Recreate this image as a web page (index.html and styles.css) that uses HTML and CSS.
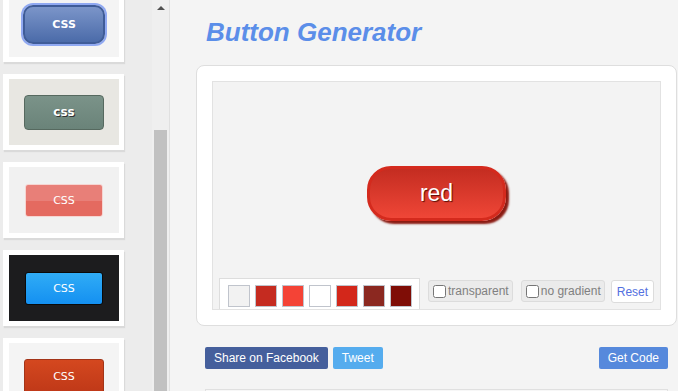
FILE: index.html
```html
<!DOCTYPE html>
<html lang="en">
<head>
    <meta charset="UTF-8">
    <meta name="viewport" content="width=device-width, initial-scale=1.0">
    <title>Button Generator</title>
    <link rel="stylesheet" href="styles.css">
</head>
<body>
    <div class="sidebar">
        <div class="thumbs">
            <div class="thumb-list">
                <div class="card"><div class="card-view view-light"><span class="demo demo-blue">CSS</span></div></div>
                <div class="card"><div class="card-view view-beige"><span class="demo demo-sage">css</span></div></div>
                <div class="card"><div class="card-view view-grey"><span class="demo demo-salmon">CSS</span></div></div>
                <div class="card"><div class="card-view view-dark"><span class="demo demo-sky">CSS</span></div></div>
                <div class="card"><div class="card-view view-light"><span class="demo demo-orange">CSS</span></div></div>
            </div>
        </div>
        <div class="scrollbar">
            <div class="arrow"></div>
            <div class="thumb"></div>
        </div>
    </div>

    <div class="main">
        <h1>Button Generator</h1>

        <div class="panel">
            <div class="preview">
                <span class="big-button">red</span>

                <div class="toolbar">
                    <div class="swatches">
                        <span class="swatch" style="background:#f2f2f2"></span>
                        <span class="swatch" style="background:#c52b20"></span>
                        <span class="swatch" style="background:#f44336"></span>
                        <span class="swatch" style="background:#ffffff"></span>
                        <span class="swatch" style="background:#d3271a"></span>
                        <span class="swatch" style="background:#8b2820"></span>
                        <span class="swatch" style="background:#7f0d06"></span>
                    </div>
                    <label class="option"><input type="checkbox">transparent</label>
                    <label class="option"><input type="checkbox">no gradient</label>
                    <button class="reset">Reset</button>
                </div>
            </div>
        </div>

        <div class="actions">
            <a class="btn btn-facebook">Share on Facebook</a>
            <a class="btn btn-tweet">Tweet</a>
            <a class="btn btn-code">Get Code</a>
        </div>

        <div class="code-box"></div>
    </div>
</body>
</html>
```

FILE: styles.css
```css
body {
    margin: 0;
    height: 391px;
    overflow: hidden;
    display: flex;
    font-family: "Liberation Sans", Arial, sans-serif;
    background: #f4f4f4;
}

/* left column with the presets */
.sidebar {
    display: flex;
    width: 169px;
    flex-shrink: 0;
    background: #ececec;
    border-right: 1px solid #e0e0e0;
}

.thumbs {
    width: 152px;
    overflow: hidden;
}

.thumb-list {
    margin-top: -14px;
    padding-left: 3px;
}

.card {
    width: 110px;
    padding: 5px 5px 5px 6px;
    margin-bottom: 12px;
    background: #fff;
    box-shadow: 1px 2px 1px #dadada;
}

.card-view {
    height: 66px;
    display: flex;
    align-items: center;
    justify-content: center;
}

.view-light { background: #f4f4f4; }
.view-beige { background: #e8e7e2; }
.view-grey { background: #f1f1f1; }
.view-dark { background: #1c1c1e; }

.demo {
    display: flex;
    align-items: center;
    justify-content: center;
    box-sizing: border-box;
    color: #fff;
    font-family: "DejaVu Sans", Verdana, sans-serif;
    font-size: 11px;
}

.demo-blue {
    width: 82px;
    height: 39px;
    border: 2px solid #3f5c98;
    border-radius: 10px;
    background: linear-gradient(#7b95c9, #4b6ba9);
    box-shadow: 0 0 0 2px #90a9f2;
    font-weight: bold;
}

.demo-sage {
    width: 80px;
    height: 35px;
    border: 1px solid #56695f;
    border-radius: 4px;
    background: linear-gradient(#7b9389, #6a8379);
    font-weight: bold;
    font-size: 12px;
    text-shadow: 1px 1px 0 #333;
}

.demo-salmon {
    width: 78px;
    height: 33px;
    border: 1px solid #f6d5d2;
    border-radius: 3px;
    background: linear-gradient(#e87f78 50%, #e46a60 50%);
}

.demo-sky {
    width: 78px;
    height: 33px;
    border: 1px solid #0a0a0a;
    border-radius: 3px;
    background: linear-gradient(#30acf6, #1490f1);
}

.demo-orange {
    width: 80px;
    height: 35px;
    border: 1px solid #a33418;
    border-radius: 3px;
    background: linear-gradient(#d4481f, #bf3818);
}

.scrollbar {
    width: 17px;
    background: #efefef;
}

.arrow {
    width: 0;
    height: 0;
    margin: 6px auto 0;
    border-left: 4px solid transparent;
    border-right: 4px solid transparent;
    border-bottom: 4px solid #505050;
}

.thumb {
    width: 13px;
    height: 300px;
    margin: 120px 0 0 2px;
    background: #c1c1c1;
}

/* right side */
.main {
    flex: 1;
    min-width: 0;
    overflow: hidden;
    padding: 0 1px 0 26px;
}

h1 {
    margin: 0;
    padding: 17px 0 0 10px;
    height: 30px;
    line-height: 30px;
    font-size: 26px;
    font-style: italic;
    font-weight: bold;
    color: #5b8ee9;
}

.panel {
    margin-top: 18px;
    padding: 15px;
    background: #fff;
    border: 1px solid #dedede;
    border-radius: 8px;
}

.preview {
    display: grid;
    grid-template-columns: minmax(0, 1fr);
    height: 229px;
    box-sizing: border-box;
    background: #f3f3f3;
    border: 1px solid #e2e2e2;
}

.big-button {
    grid-area: 1 / 1;
    place-self: center;
    margin-bottom: 4px;
    width: 139px;
    height: 55px;
    box-sizing: border-box;
    display: flex;
    align-items: center;
    justify-content: center;
    border: 3px solid #d42a1d;
    border-radius: 24px;
    background: linear-gradient(#c42d21, #ef4637);
    box-shadow: 3px 3px 2px #8b1b12;
    color: #fff;
    font-size: 23px;
    text-shadow: 1px 1px 1px #5a0d08;
}

.toolbar {
    grid-area: 1 / 1;
    align-self: end;
    display: flex;
    align-items: flex-end;
    margin-left: 6px;
}

.swatches {
    display: flex;
    gap: 5px;
    padding: 6px 7px 2px 8px;
    background: #fff;
    border: 1px solid #dddddd;
    border-bottom: none;
}

.swatch {
    width: 20px;
    height: 20px;
    border: 1px solid #c0c4cc;
}

.option {
    display: flex;
    align-items: center;
    margin: 0 0 7px 8px;
    height: 20px;
    padding-right: 3px;
    white-space: nowrap;
    background: #ebebeb;
    border: 1px solid #dcdcdc;
    border-radius: 3px;
    font-size: 12px;
    color: #808080;
}

.option input {
    margin: 0 2px 0 4px;
    width: 13px;
    height: 13px;
}

.reset {
    margin: 0 0 6px 6px;
    height: 23px;
    padding: 0 5px;
    background: #fff;
    border: 1px solid #dcdcdc;
    border-radius: 3px;
    font-family: "Liberation Sans", Arial, sans-serif;
    font-size: 12px;
    color: #5470e0;
}

.actions {
    display: flex;
    gap: 5px;
    margin-top: 21px;
    padding: 0 9px;
}

.btn {
    height: 22px;
    line-height: 22px;
    padding: 0 9px;
    border-radius: 2px;
    color: #fff;
    font-size: 12px;
}

.btn-facebook { background: #455f9c; }
.btn-tweet { background: #55acee; }

.btn-code {
    margin-left: auto;
    background: #5689dc;
}

.code-box {
    margin: 20px 9px 0;
    height: 40px;
    background: #f7f7f7;
    border: 1px solid #e0e0e0;
}
```
